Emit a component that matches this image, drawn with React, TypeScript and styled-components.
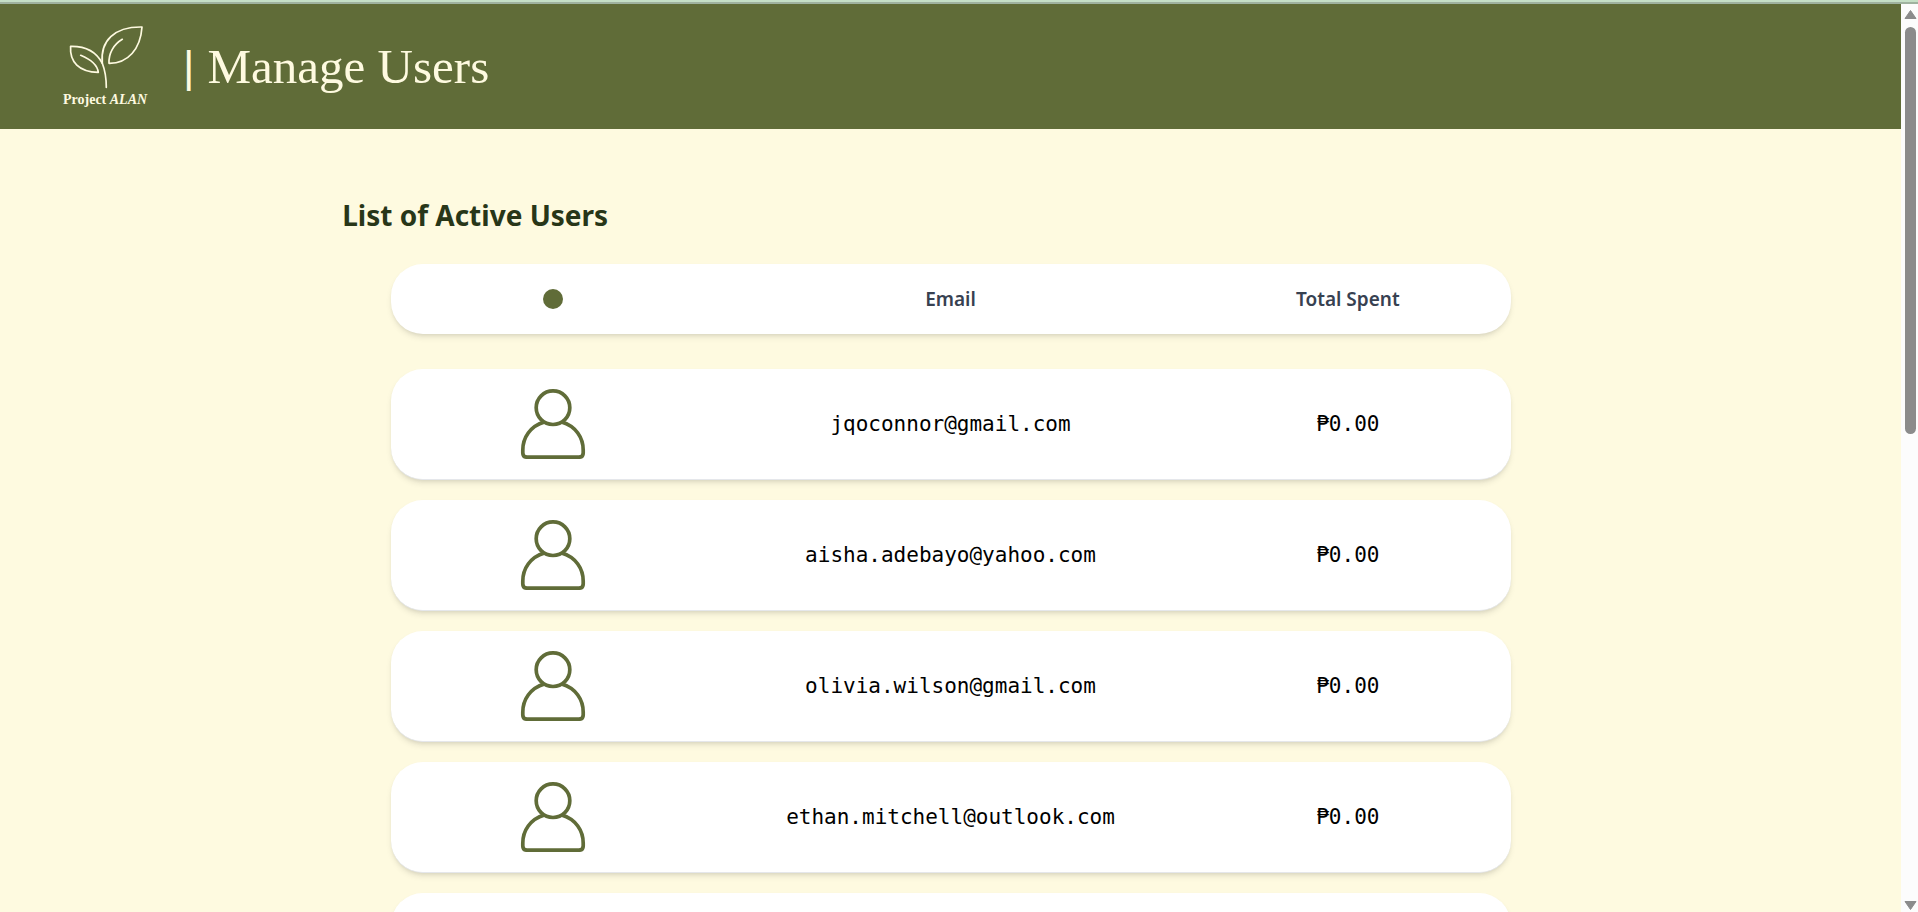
import React from "react";
import styled, { createGlobalStyle } from "styled-components";

const olive = "#606c38";
const cream = "#fefae0";
const forest = "#283618";
const uiFont = `"Noto Sans", "Open Sans", sans-serif`;

const GlobalStyle = createGlobalStyle`
  *, *::before, *::after { box-sizing: border-box; }
  body { margin: 0; background: ${cream}; font-family: ${uiFont}; }
`;

const Shell = styled.div`
  display: flex;
  flex-direction: column;
  height: 100vh;
`;

const TopStrip = styled.div`
  flex: none;
  height: 4px;
  background: #c5dfc6;
  border-bottom: 2px solid #9fb29f;
`;

const Viewport = styled.div`
  flex: 1;
  min-height: 0;
  display: flex;
`;

const Page = styled.div`
  flex: 1;
  min-width: 0;
  overflow-y: auto;
  scrollbar-width: none;
`;

const Header = styled.header`
  display: flex;
  align-items: center;
  gap: 36px;
  height: 125px;
  padding: 0 63px;
  background: ${olive};
  color: ${cream};
`;

const Brand = styled.a`
  display: flex;
  flex-direction: column;
  align-items: center;
  color: inherit;
  text-decoration: none;
  font: bold 14px/20px "Liberation Serif", serif;
  white-space: nowrap;
`;

const Title = styled.h1`
  display: flex;
  align-items: center;
  gap: 13px;
  margin: 0;
  font: 400 49px/60px "Liberation Serif", serif;
`;

const Divider = styled.span`
  font: 400 44px/60px "Liberation Sans", sans-serif;
`;

const Main = styled.main`
  padding: 64px 18% 0;
`;

const Heading = styled.h2`
  margin: 0;
  color: ${forest};
  font-size: 28px;
  line-height: 44px;
`;

const UserTable = styled.table`
  display: flex;
  flex-direction: column;
  gap: 35px;
  max-width: 1120px;
  margin: 27px auto 0;
`;

const TableHead = styled.thead`
  display: block;
`;

const TableBody = styled.tbody`
  display: flex;
  flex-direction: column;
  gap: 20px;
`;

const Row = styled.tr<{ $heading?: boolean }>`
  display: grid;
  grid-template-columns: repeat(3, minmax(0, 1fr));
  column-gap: 72px;
  align-items: center;
  justify-items: center;
  height: ${(p) => (p.$heading ? 70 : 111)}px;
  border-bottom: ${(p) => (p.$heading ? "none" : "1px solid #e5e7eb")};
  border-radius: 32px;
  background: #fff;
  box-shadow: 0 4px 6px -1px rgb(0 0 0 / 0.1), 0 2px 4px -2px rgb(0 0 0 / 0.1);
`;

const HeadCell = styled.th`
  padding: 0;
  color: #374151;
  font-size: 19px;
  font-weight: 600;
  line-height: 28px;
`;

const Dot = styled.span`
  display: block;
  width: 20px;
  height: 20px;
  border-radius: 50%;
  background: ${olive};
`;

const Cell = styled.td`
  padding: 0;
  color: #000;
  font: 21px/28px "DejaVu Sans Mono", monospace;
  white-space: nowrap;
`;

const UserIcon = styled.svg`
  display: block;
  width: 70px;
  height: 70px;
  fill: none;
  stroke: ${olive};
  stroke-width: 3.7;
`;

const Scrollbar = styled.div`
  flex: none;
  display: flex;
  flex-direction: column;
  align-items: center;
  width: 17px;
  padding: 5px 0 1px 2px;
  background: #fcfcfc;
`;

const Track = styled.div`
  flex: 1;
  width: 11px;
  padding: 7px 0 6px;
`;

const Thumb = styled.div`
  height: 47%;
  border-radius: 6px;
  background: #8b8b8b;
`;

const Arrow = styled.svg`
  display: block;
  width: 13px;
  height: 11px;
  fill: #8b8b8b;
  stroke: #8b8b8b;
  stroke-linejoin: round;
`;

const Sprout = () => (
  <svg width="76" height="66" viewBox="7 4 76 66" fill="none" stroke={cream} strokeWidth="1.7" strokeLinecap="round" strokeLinejoin="round" aria-hidden="true">
    <path d="M46.3 67.3C46.3 57 44.5 49 42.3 43.3C36 31 24 26 10.6 26.3C9.5 42 19 52 38.3 52.3C37.3 45 31 39.5 20.7 35.3" />
    <path d="M42.3 43.3C40 21 54 6.5 82 7C80.500 29 68 43.5 49 43.3C48.500 33.500 53.500 24.500 62.3 19.3" />
  </svg>
);

const users: { email?: string; spent: string }[] = [
  { email: "jqoconnor@gmail.com", spent: "₱0.00" },
  { email: "aisha.adebayo@yahoo.com", spent: "₱0.00" },
  { email: "olivia.wilson@gmail.com", spent: "₱0.00" },
  { email: "ethan.mitchell@outlook.com", spent: "₱0.00" },
  { spent: "" },
];

const Avatar = () => (
  <UserIcon viewBox="0 0 70 70" aria-hidden="true">
    <circle cx="35" cy="18.7" r="16.8" />
    <path d="M26.500 33C12 37 4.800 49 4.800 61V64Q4.800 68.200 9 68.200H61Q65.200 68.200 65.200 64V61C65.200 49 58 37 43.500 33" />
  </UserIcon>
);

export default function App() {
  return (
    <Shell>
      <GlobalStyle />
      <TopStrip />
      <Viewport>
        <Page>
          <Header>
            <Brand href="#">
              <Sprout />
              <span>Project <em>ALAN</em></span>
            </Brand>
            <Title><Divider>|</Divider>Manage Users</Title>
          </Header>
          <Main>
            <Heading>List of Active Users</Heading>
            <UserTable>
              <TableHead>
                <Row $heading>
                  <HeadCell aria-label="User"><Dot /></HeadCell>
                  <HeadCell>Email</HeadCell>
                  <HeadCell>Total Spent</HeadCell>
                </Row>
              </TableHead>
              <TableBody>
                {users.map((user, i) => (
                  <Row key={i}>
                    <Cell><Avatar /></Cell>
                    <Cell>{user.email}</Cell>
                    <Cell>{user.spent}</Cell>
                  </Row>
                ))}
              </TableBody>
            </UserTable>
          </Main>
        </Page>
        <Scrollbar aria-hidden="true">
          <Arrow viewBox="0 0 13 11"><path d="M6.5 1.5L12 9.5H1Z" /></Arrow>
          <Track><Thumb /></Track>
          <Arrow viewBox="0 0 13 11"><path d="M6.5 9.5L12 1.5H1Z" /></Arrow>
        </Scrollbar>
      </Viewport>
    </Shell>
  );
}
